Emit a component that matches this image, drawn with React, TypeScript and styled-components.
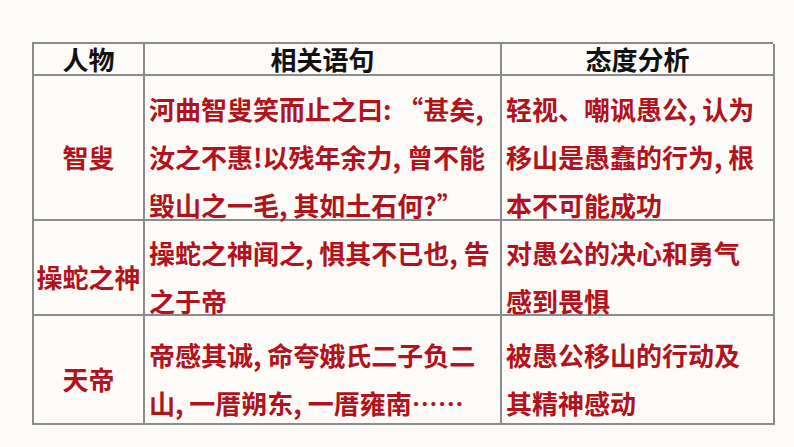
import React from 'react';
import styled, { createGlobalStyle } from 'styled-components';

const GlobalStyle = createGlobalStyle`
  html, body {
    margin: 0;
    padding: 0;
    background: #fcfbf8;
  }
  * {
    box-sizing: border-box;
  }
`;

const Page = styled.div`
  width: 794px;
  height: 447px;
  padding: 42px 0 0 32px;
  background: #fcfbf8;
  font-family: "Noto Sans CJK SC", "Noto Sans", sans-serif;
  overflow: hidden;
`;

const Table = styled.div`
  display: grid;
  grid-template-columns: 111px 357px 273px;
  grid-template-rows: 32px 145px 95px 109px;
  width: 741px;
  border-left: 2px solid #8c8c8c;
  border-top: 2px solid #8c8c8c;
`;

const Cell = styled.div<{ $align?: 'center' | 'left' }>`
  display: flex;
  align-items: center;
  justify-content: ${p => (p.$align === 'left' ? 'flex-start' : 'center')};
  padding: 19px 0 0 ${p => (p.$align === 'left' ? '4px' : '0')};
  border-right: 2px solid #8c8c8c;
  border-bottom: 2px solid #8c8c8c;
  font-size: 26px;
  line-height: 48px;
  font-weight: 700;
  color: #b2121b;
  white-space: nowrap;
`;

const HeadCell = styled(Cell)`
  padding: 0;
  color: #111;
  line-height: 30px;
  font-weight: 700;
`;

const Lines = styled.div`
  display: flex;
  flex-direction: column;
`;

interface Row {
  who: string;
  said: string[];
  attitude: string[];
}

const rows: Row[] = [
  {
    who: '智叟',
    said: ['河曲智叟笑而止之曰: “甚矣,', '汝之不惠!以残年余力, 曾不能', '毁山之一毛, 其如土石何?”'],
    attitude: ['轻视、嘲讽愚公, 认为', '移山是愚蠢的行为, 根', '本不可能成功'],
  },
  {
    who: '操蛇之神',
    said: ['操蛇之神闻之, 惧其不已也, 告', '之于帝'],
    attitude: ['对愚公的决心和勇气', '感到畏惧'],
  },
  {
    who: '天帝',
    said: ['帝感其诚, 命夸娥氏二子负二', '山, 一厝朔东, 一厝雍南……'],
    attitude: ['被愚公移山的行动及', '其精神感动'],
  },
];

const App: React.FC = () => {
  return (
    <Page>
      <GlobalStyle />
      <Table>
        <HeadCell>人物</HeadCell>
        <HeadCell>相关语句</HeadCell>
        <HeadCell>态度分析</HeadCell>
        {rows.map(row => (
          <React.Fragment key={row.who}>
            <Cell>{row.who}</Cell>
            <Cell $align="left">
              <Lines>
                {row.said.map(line => <span key={line}>{line}</span>)}
              </Lines>
            </Cell>
            <Cell $align="left">
              <Lines>
                {row.attitude.map(line => <span key={line}>{line}</span>)}
              </Lines>
            </Cell>
          </React.Fragment>
        ))}
      </Table>
    </Page>
  );
};

export default App;
